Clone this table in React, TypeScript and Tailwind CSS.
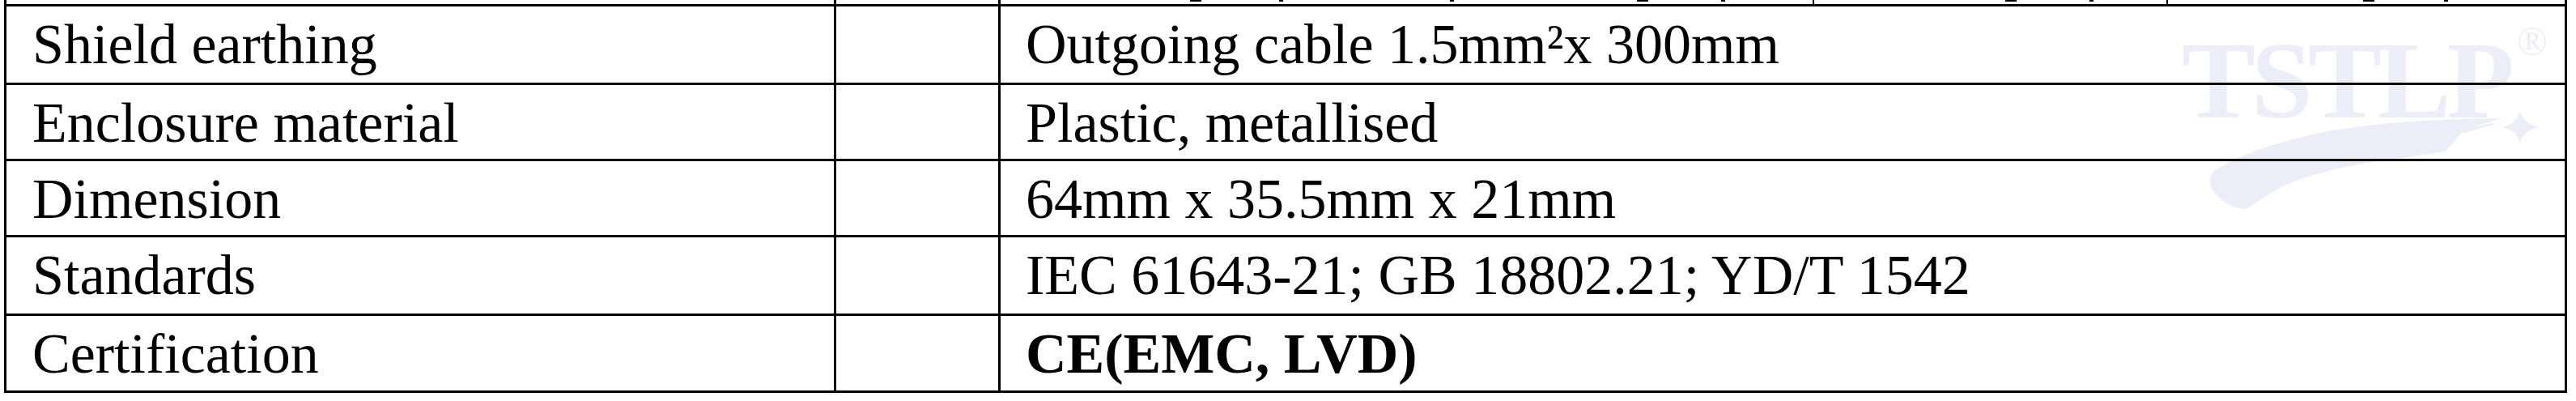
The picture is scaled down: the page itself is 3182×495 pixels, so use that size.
import React from "react";

type Row = {
  label: string;
  value: string;
  bold?: boolean;
  h: string;
};

const rows: Row[] = [
  { label: "Shield earthing", value: "Outgoing cable 1.5mm²x 300mm", h: "h-[97px]" },
  { label: "Enclosure material", value: "Plastic, metallised", h: "h-[94px]" },
  { label: "Dimension", value: "64mm x 35.5mm x 21mm", h: "h-[94px]" },
  { label: "Standards", value: "IEC 61643-21; GB 18802.21; YD/T 1542", h: "h-[97px]" },
  { label: "Certification", value: "CE(EMC, LVD)", bold: true, h: "h-[95px]" },
];

// clipped descenders of the row above, peeking into the top strip
const fragments = [
  "left-[1462px] w-[14px]",
  "left-[1572px] w-[5px]",
  "left-[1783px] w-[5px]",
  "left-[2014px] w-[14px]",
  "left-[2118px] w-[5px]",
  "left-[2469px] w-[14px]",
  "left-[2573px] w-[5px]",
  "left-[2911px] w-[14px]",
  "left-[3011px] w-[5px]",
];

function Watermark() {
  return (
    <div className="absolute left-[2650px] top-0 w-[532px] h-[300px] text-[#eceef7] font-['Liberation_Serif','Times_New_Roman',serif] select-none">
      <svg className="absolute inset-0" width="532" height="300" viewBox="0 0 532 300">
        {/* swoosh */}
        <path
          d="M83 213 C110 192 160 176 221 163 C280 152 350 147 441 146 C420 152 405 156 400 160 C392 163 388 166 387 168 C380 176 375 182 370 187 C340 192 310 196 280 200 C238 207 200 216 170 230 C150 240 138 250 128 256 C118 260 105 256 94 246 C82 236 76 224 83 213 Z"
          fill="currentColor"
        />
        <path d="M336 180 L375 178 L374 183 L336 185 Z" fill="currentColor" />
        <path d="M392 160 L432 151 L430 154 L394 164 Z" fill="currentColor" />
        {/* star */}
        <path
          d="M463 137 Q467 153 487 157 Q467 161 463 177 Q459 161 441 157 Q459 153 463 137 Z"
          fill="currentColor"
        />
      </svg>
      <span className="absolute left-[45px] top-[31px] text-[136px] leading-none font-bold tracking-[-5px] whitespace-nowrap">
        TSTLP
      </span>
      <span className="absolute left-[459px] top-[26px] text-[50px] leading-none whitespace-nowrap">®</span>
    </div>
  );
}

export default function App() {
  return (
    <div className="relative w-[3182px] h-[495px] bg-white overflow-hidden font-['Liberation_Serif','Times_New_Roman',serif] text-black">
      <Watermark />

      <div className="relative ml-[5px] w-[3166px] border-x-[3px] border-b-[3px] border-black">
        {/* tail of the previous row */}
        <div className="grid grid-cols-[1025px_203px_1005px_437px_1fr] h-[5px]">
          <div className="border-r-[3px] border-black" />
          <div className="border-r-[3px] border-black" />
          <div className="border-r-[2px] border-black" />
          <div className="border-r-[2px] border-black" />
          <div />
        </div>
        {fragments.map((f) => (
          <div key={f} className={`absolute top-0 h-[2px] bg-black ${f}`} />
        ))}

        {rows.map((r) => (
          <div
            key={r.label}
            className={`grid grid-cols-[1025px_203px_1fr] border-t-[3px] border-black ${r.h}`}
          >
            <div className="border-r-[3px] border-black pl-[32px] pt-[12px] text-[70px] leading-[70px] whitespace-nowrap">
              {r.label}
            </div>
            <div className="border-r-[3px] border-black" />
            <div
              className={`pl-[31px] pt-[12px] text-[70px] leading-[70px] whitespace-nowrap ${
                r.bold ? "font-bold" : "font-normal"
              }`}
            >
              {r.value}
            </div>
          </div>
        ))}
      </div>
    </div>
  );
}
